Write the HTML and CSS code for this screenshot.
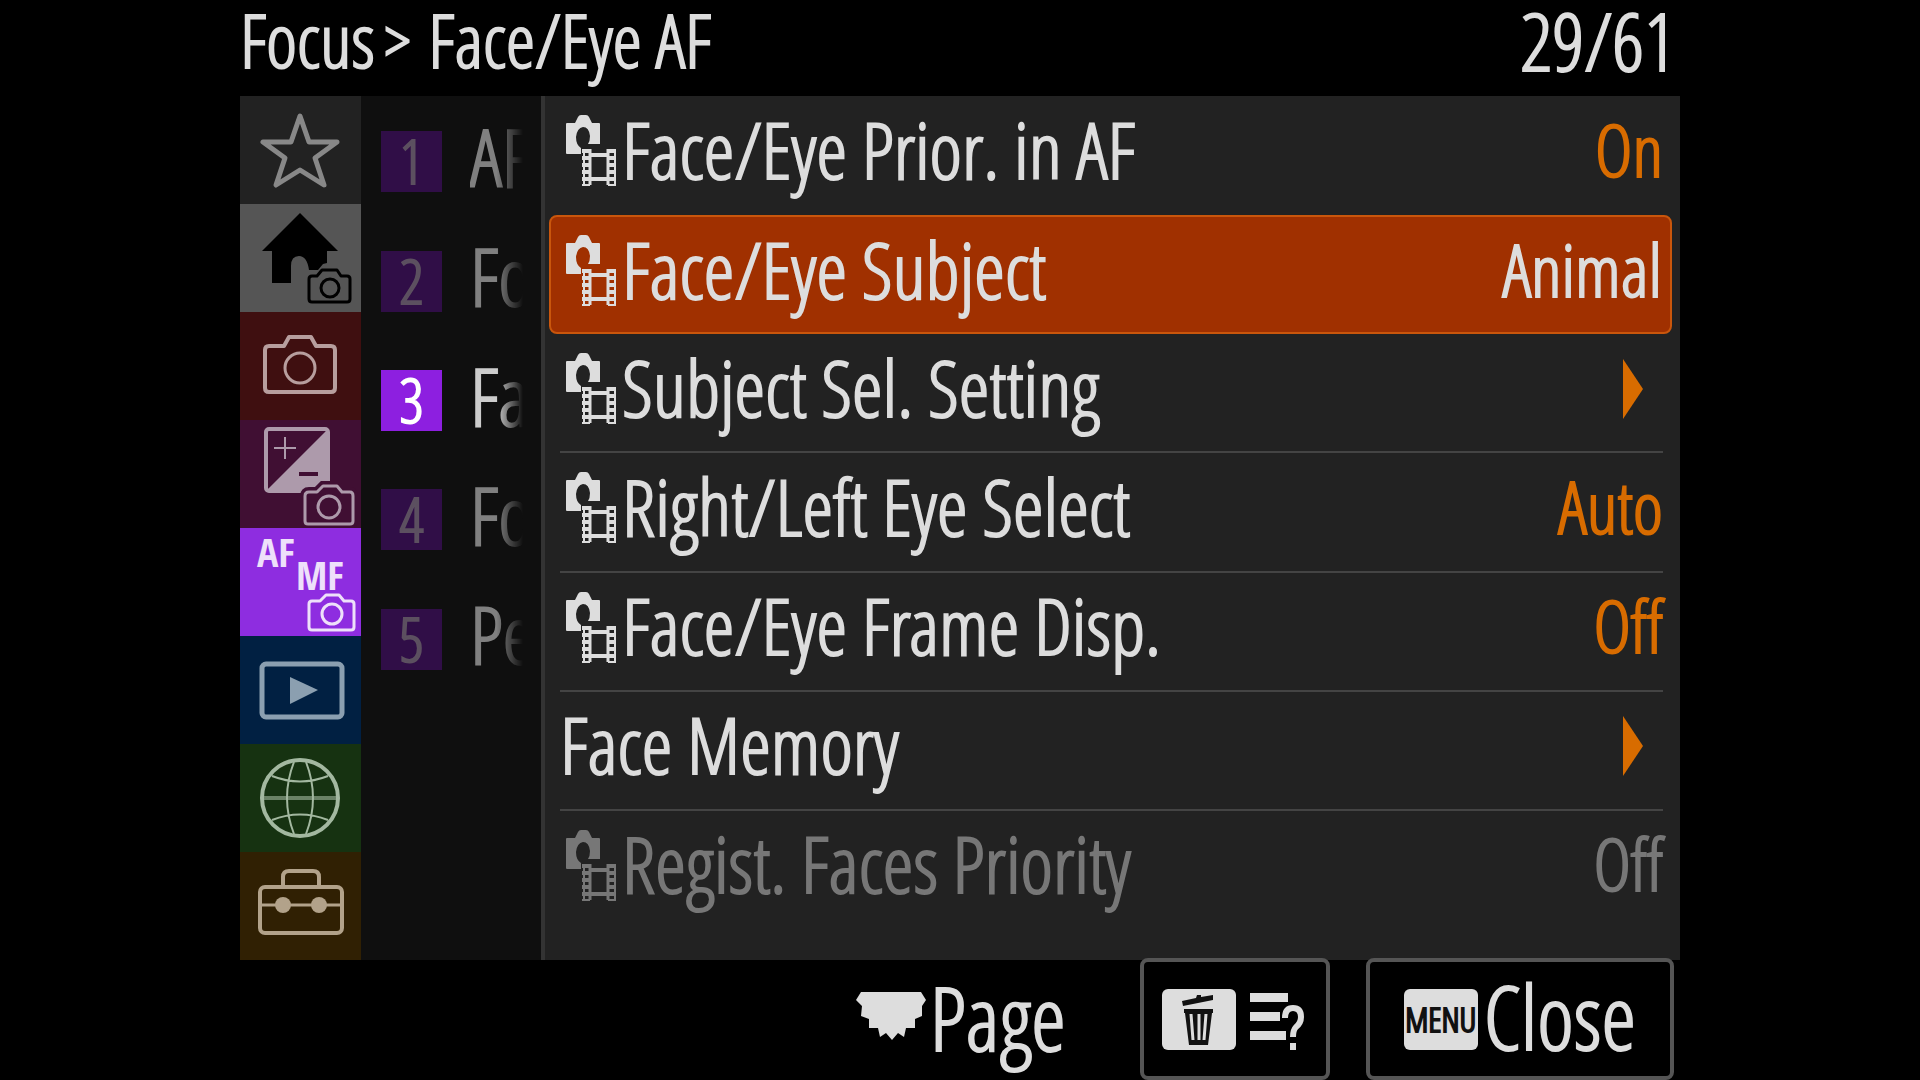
FILE: index.html
```html
<!DOCTYPE html>
<html lang="en">
<head>
<meta charset="utf-8">
<title>Focus &gt; Face/Eye AF</title>
<link rel="stylesheet" href="styles.css">
</head>
<body>

<svg class="defs" aria-hidden="true">
  <!-- still + movie marker in front of the menu items -->
  <symbol id="media" viewBox="0 0 50 71">
    <path fill="currentColor" fill-rule="evenodd" d="M1 8H9L12 2Q13 0 15 0H20Q22 0 23 2L26 8H33Q34 8 34 9V29H22Q24 26 24 21Q23 12 17 12Q11 13 10 22Q10 30 15 33V39H1Q0 39 0 38V9Q0 8 1 8Z"/>
    <g fill="none" stroke="currentColor">
      <path stroke-width="4" d="M24 40H42M24 64H42"/>
      <path stroke-width="3" d="M24 34V70M42 34V70"/>
      <path stroke-width="8" stroke-dasharray="4 3" d="M20 34V71M46 34V71"/>
      <path stroke-width="2" d="M18 34V70M49 34V70"/>
    </g>
  </symbol>
</svg>

<div class="menu">
  <header class="title">
    <h1><span>Focus</span><span class="sep">&gt;</span><span>Face/Eye AF</span></h1>
    <span class="count">29/61</span>
  </header>

  <main class="screen">
    <nav class="tabs">
      <button class="tab my" aria-label="My Menu">
        <svg viewBox="0 0 120 108"><path class="line w5" d="M60 20L69 46H97L75 62L84 89L60 74L36 89L45 62L23 46H51Z"/></svg>
      </button>
      <button class="tab main" aria-label="Main">
        <svg viewBox="0 0 120 108">
          <path fill="currentColor" d="M60 9L98 47H87V59L83 60L78 66H69Q67 52 59 52Q51 52 51 62V79H32V47H22Z"/>
          <path class="line w3" d="M72 72H77L82 66H97L101 72H107Q110 72 110 75V95Q110 98 107 98H72Q69 98 69 95V75Q69 72 72 72Z"/>
          <circle class="line w3" cx="90" cy="84" r="9"/>
        </svg>
      </button>
      <button class="tab shoot" aria-label="Shooting">
        <svg viewBox="0 0 120 108">
          <path class="line w4" d="M29 34H44L49 25H71L76 34H91Q95 34 95 38V76Q95 80 91 80H29Q25 80 25 76V38Q25 34 29 34Z"/>
          <circle class="line w3" cx="60" cy="56" r="15"/>
        </svg>
      </button>
      <button class="tab expo" aria-label="Exposure/Color">
        <svg viewBox="0 0 120 108">
          <rect class="line w4" x="26" y="9" width="62" height="62" rx="3"/>
          <path fill="currentColor" d="M88 9V71H26Z"/>
          <path class="line w2" d="M34 28H56M45 17V39"/>
          <path class="cut w4" d="M59 54H78"/>
          <path class="cut w10" fill="#400f33" d="M69 72H77L83 66H97L102 72H110Q113 72 113 76V101Q113 104 110 104H68Q65 104 65 101V76Q65 72 69 72Z"/>
          <path class="line w3" d="M69 72H77L83 66H97L102 72H110Q113 72 113 76V101Q113 104 110 104H68Q65 104 65 101V76Q65 72 69 72Z"/>
          <circle class="line w3" cx="89" cy="87" r="11"/>
        </svg>
      </button>
      <button class="tab focus" aria-label="Focus" aria-current="page">
        <svg viewBox="0 0 120 108">
          <text x="17" y="39">AF</text>
          <text x="56" y="62">MF</text>
          <path class="line w3" d="M72 73H80L86 67H99L104 73H111Q114 73 114 76V99Q114 102 111 102H72Q69 102 69 99V76Q69 73 72 73Z"/>
          <circle class="line w3" cx="92" cy="86" r="10"/>
        </svg>
      </button>
      <button class="tab play" aria-label="Playback">
        <svg viewBox="0 0 120 108">
          <rect class="line w5" x="22" y="28" width="80" height="53" rx="4"/>
          <path fill="currentColor" d="M50 41L78 54L50 68Z"/>
        </svg>
      </button>
      <button class="tab network" aria-label="Network">
        <svg viewBox="0 0 120 108">
          <circle class="line w4" cx="60" cy="54" r="38"/>
          <path class="line w4 dim" d="M23 54H97"/>
          <path class="line w2" d="M54 18Q40 54 54 90M66 18Q80 54 66 90M32 32Q60 43 88 32M32 76Q60 65 88 76"/>
        </svg>
      </button>
      <button class="tab setup" aria-label="Setup">
        <svg viewBox="0 0 120 108">
          <rect class="line w4" x="20" y="35" width="82" height="46" rx="5"/>
          <path class="line w4" d="M43 34V25Q43 19 49 19H73Q79 19 79 25V34"/>
          <path class="line w3" d="M20 53H102"/>
          <circle fill="currentColor" cx="43" cy="53" r="8"/>
          <circle fill="currentColor" cx="79" cy="53" r="8"/>
        </svg>
      </button>
    </nav>

    <nav class="groups">
      <button class="group"><span class="num">1</span><span class="name">AF</span></button>
      <button class="group"><span class="num">2</span><span class="name">Fo</span></button>
      <button class="group active"><span class="num">3</span><span class="name">Fa</span></button>
      <button class="group"><span class="num">4</span><span class="name">Fo</span></button>
      <button class="group"><span class="num">5</span><span class="name">Pe</span></button>
    </nav>

    <div class="items">
      <button class="item plain"><svg class="media"><use href="#media"/></svg><span class="label">Face/Eye Prior. in AF</span><span class="value">On</span></button>
      <button class="item selected"><svg class="media"><use href="#media"/></svg><span class="label">Face/Eye Subject</span><span class="value">Animal</span></button>
      <button class="item"><svg class="media"><use href="#media"/></svg><span class="label">Subject Sel. Setting</span><svg class="arrow" viewBox="0 0 20 60"><path d="M0 0L20 30L0 60Z"/></svg></button>
      <button class="item"><svg class="media"><use href="#media"/></svg><span class="label">Right/Left Eye Select</span><span class="value">Auto</span></button>
      <button class="item"><svg class="media"><use href="#media"/></svg><span class="label">Face/Eye Frame Disp.</span><span class="value">Off</span></button>
      <button class="item"><span class="label">Face Memory</span><svg class="arrow" viewBox="0 0 20 60"><path d="M0 0L20 30L0 60Z"/></svg></button>
      <button class="item plain" disabled><svg class="media"><use href="#media"/></svg><span class="label">Regist. Faces Priority</span><span class="value">Off</span></button>
    </div>
  </main>

  <footer class="keys">
    <div class="page">
      <svg class="dial" viewBox="0 0 70 48"><path fill="currentColor" d="M5 0H65L70 8L66 14V24L59 27V36H50L48 45L42 41L36 48L30 41L24 45L22 36H13V27L5 24L6 14L0 8Z"/></svg>
      <span class="label">Page</span>
    </div>
    <button class="key help" aria-label="Help">
      <span class="badge">
        <svg viewBox="0 0 74 61">
          <path fill="#111" d="M20 12L34 9L35 6H39V8L51 6V11L21 17ZM22 20H51V24H50L46 56H27L23 24H22Z"/>
          <path fill="none" stroke="#ddd" stroke-width="3" d="M29 25L31 51M37 25V51M44 25L42 51"/>
        </svg>
      </span>
      <svg class="list" viewBox="0 0 56 61">
        <path fill="currentColor" d="M0 4H38V13H0ZM0 23H30V32H0ZM0 42H36V51H0Z"/>
        <path fill="none" stroke="currentColor" stroke-width="6" d="M35 29Q35 19 43 19Q51 19 51 28Q51 34 46 38Q43 41 43 48M43 54V61"/>
      </svg>
    </button>
    <button class="key close"><span class="badge">MENU</span><span class="label">Close</span></button>
  </footer>
</div>

</body>
</html>
```
FILE: styles.css
```css
* { box-sizing: border-box; }

html, body { height: 100%; }

body {
  margin: 0;
  background: #000;
  color: #ddd;
  font-family: "Open Sans Condensed Light", "Roboto Condensed", "Open Sans", sans-serif;
  -webkit-text-stroke: 2px currentColor;
}

button {
  margin: 0;
  padding: 0;
  border: 0;
  background: none;
  color: inherit;
  font: inherit;
  text-align: left;
  cursor: pointer;
}

svg { display: block; flex: none; }
.defs { position: absolute; width: 0; height: 0; }

.menu {
  display: flex;
  flex-direction: column;
  width: 75%;
  min-height: 100%;
  margin: 0 auto;
}

/* title bar */
.title {
  display: flex;
  justify-content: space-between;
  align-items: center;
  height: 96px;
  padding: 0 4px 16px 0;
  font-size: 74px;
  line-height: 76px;
}
.title h1 { display: flex; margin: 0; font: inherit; }
.title .sep { margin: 0 18px 0 10px; font-size: 64px; }
.title .count { font-size: 80px; }

.screen { display: flex; flex: 1; background: #222; }

/* tab column */
.tabs { display: flex; flex-direction: column; width: 121px; }
.tab { height: 108px; }
.tab svg { width: 120px; height: 108px; }
.tab.my      { background: #222;    color: #888; }
.tab.main    { background: #555;    color: #000; }
.tab.shoot   { background: #3f0f10; color: #b79e9e; }
.tab.expo    { background: #400f33; color: #ad9aab; }
.tab.focus   { background: #8e2de0; color: #eee0fa; }
.tab.play    { background: #012042; color: #8b9fb0; }
.tab.network { background: #163211; color: #a3b8a0; }
.tab.setup   { background: #302003; color: #b2a28a; }
.tab text {
  fill: currentColor;
  stroke: none;
  font: bold 40px "Open Sans Condensed", "Roboto Condensed", sans-serif;
  -webkit-text-stroke: 1px currentColor;
}

.line { fill: none; stroke: currentColor; stroke-linejoin: round; }
.cut { stroke: #400f33; }
.dim { opacity: 0.6; }
.w2 { stroke-width: 2px; }
.w3 { stroke-width: 3px; }
.w4 { stroke-width: 4px; }
.w5 { stroke-width: 5px; }
.w10 { stroke-width: 10px; }

/* group column, names fade out on the right */
.groups {
  display: grid;
  grid-template-rows: repeat(7, 1fr);
  width: 184px;
  padding: 6px 18px 22px 20px;
  border-right: 4px solid #333;
  background: #0f0f0f;
}
.group {
  display: flex;
  align-items: center;
  gap: 28px;
  color: #808080;
}
.num {
  flex: none;
  width: 61px;
  height: 61px;
  background: #300e47;
  color: #5c5060;
  font-size: 60px;
  line-height: 61px;
  text-align: center;
}
.name {
  flex: 1;
  width: 0;
  overflow: hidden;
  padding-bottom: 12px;
  font-size: 80px;
  line-height: 106px;
  white-space: nowrap;
  -webkit-mask-image: linear-gradient(to right, #000 50%, transparent);
  mask-image: linear-gradient(to right, #000 50%, transparent);
}
.group.active { color: #ccc; }
.group.active .num { background: #8d1fe0; color: #fff; }

/* menu items */
.items {
  display: grid;
  grid-template-rows: repeat(7, 1fr);
  flex: 1;
  padding: 0 8px 30px 4px;
}
.item {
  display: flex;
  align-items: center;
  margin: 0 9px 0 11px;
  padding-bottom: 8px;
  border-bottom: 2px solid #444;
}
.item.plain { border-bottom-color: transparent; }
.item.selected {
  margin: 0;
  padding: 0 8px 8px 9px;
  border: 2px solid #c9560c;
  border-radius: 8px;
  background: #a03000;
}
.label { padding-bottom: 4px; font-size: 78px; line-height: 100px; white-space: nowrap; }
.media { width: 50px; height: 71px; margin: 0 6px; }
.value {
  margin-left: auto;
  padding-bottom: 4px;
  color: #d86c00;
  font-size: 72px;
  line-height: 100px;
}
.selected .value { color: #ddd; }
.arrow { width: 20px; height: 60px; margin: 0 20px 0 auto; fill: #d86c00; }
.item:disabled, .item:disabled .value { color: #777; }

/* key hints */
.keys {
  display: flex;
  justify-content: flex-end;
  height: 120px;
  padding-right: 6px;
}
.keys .label { padding-bottom: 6px; font-size: 88px; }
.page { display: flex; align-items: center; gap: 4px; margin-right: 74px; }
.dial { width: 70px; height: 48px; margin-bottom: 8px; }
.key {
  display: flex;
  align-items: center;
  height: 122px;
  margin-top: -2px;
  border: 4px solid #555;
  border-radius: 8px;
  background: #000;
}
.help { gap: 14px; padding: 0 20px 0 18px; margin-right: 36px; }
.close { gap: 6px; padding: 0 34px; }
.badge {
  flex: none;
  width: 74px;
  height: 61px;
  border-radius: 6px;
  background: #ddd;
  color: #111;
  font-size: 34px;
  line-height: 60px;
  text-align: center;
}
.list { width: 56px; height: 61px; }
```
